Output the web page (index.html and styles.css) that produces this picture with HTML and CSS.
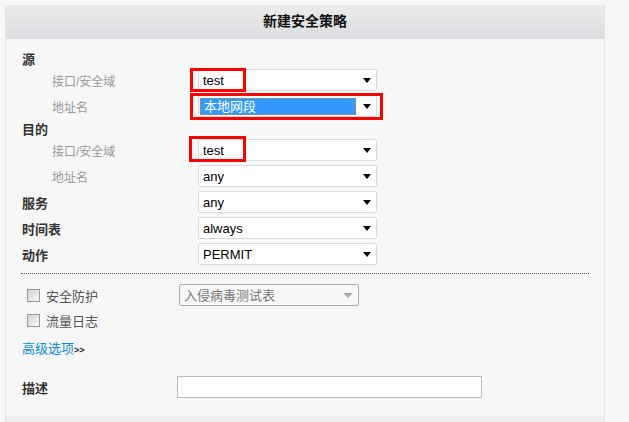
FILE: index.html
```html
<!DOCTYPE html>
<html lang="zh-CN">
<head>
    <meta charset="UTF-8">
    <title>新建安全策略</title>
    <link rel="stylesheet" href="styles.css">
</head>
<body>
    <div class="panel">
        <div class="panel-title">新建安全策略</div>

        <div class="form">
            <div class="row head"><span class="label">源</span></div>
            <div class="row">
                <span class="label sub">接口/安全域</span>
                <div class="select">
                    <span class="value">test</span><span class="arrow"></span>
                    <span class="mark mark-a"></span>
                </div>
            </div>
            <div class="row">
                <span class="label sub">地址名</span>
                <div class="select">
                    <span class="value picked">本地网段</span><span class="arrow"></span>
                    <span class="mark mark-b"></span>
                </div>
            </div>

            <div class="row head"><span class="label">目的</span></div>
            <div class="row">
                <span class="label sub">接口/安全域</span>
                <div class="select">
                    <span class="value">test</span><span class="arrow"></span>
                    <span class="mark mark-c"></span>
                </div>
            </div>
            <div class="row">
                <span class="label sub">地址名</span>
                <div class="select"><span class="value">any</span><span class="arrow"></span></div>
            </div>
            <div class="row">
                <span class="label">服务</span>
                <div class="select"><span class="value">any</span><span class="arrow"></span></div>
            </div>
            <div class="row">
                <span class="label">时间表</span>
                <div class="select"><span class="value">always</span><span class="arrow"></span></div>
            </div>
            <div class="row">
                <span class="label">动作</span>
                <div class="select"><span class="value">PERMIT</span><span class="arrow"></span></div>
            </div>

            <div class="divider"></div>

            <div class="check-row first">
                <label class="check"><span class="box"></span>安全防护</label>
                <div class="select disabled"><span class="value">入侵病毒测试表</span><span class="arrow"></span></div>
            </div>
            <div class="check-row">
                <label class="check"><span class="box"></span>流量日志</label>
            </div>

            <div class="advanced"><a href="#">高级选项</a><span class="more">&gt;&gt;</span></div>

            <div class="desc-row">
                <span class="label">描述</span>
                <input type="text" class="desc">
            </div>
        </div>

        <div class="panel-foot"></div>
    </div>
</body>
</html>
```

FILE: styles.css
```css
body {
    margin: 0;
    background: #f7f7f7;
    font-family: "Liberation Sans", "Noto Sans CJK SC", sans-serif;
    font-size: 12px;
    color: #333;
}
.panel {
    width: 598px;
    margin: 5px 0 0 5px;
    border-left: 1px solid #e4e4e4;
    border-right: 1px solid #e4e4e4;
    background: #f7f7f7;
}
.panel-title {
    height: 34px;
    line-height: 32px;
    text-align: center;
    font-size: 14px;
    font-weight: bold;
    color: #111;
    background: linear-gradient(to bottom, #ebebed, #dcdde0);
}
.form {
    padding: 10px 15px 0 15px;
}
.row {
    display: flex;
    align-items: center;
    height: 26px;
}
.row.head {
    height: 18px;
}
.label {
    width: 176px;
    flex: none;
    padding-left: 1px;
    font-size: 13px;
    font-weight: bold;
    color: #333;
}
.label.sub {
    width: 146px;
    padding-left: 31px;
    font-size: 12px;
    font-weight: normal;
    color: #999;
}
.select {
    position: relative;
    box-sizing: border-box;
    width: 179px;
    height: 22px;
    border: 1px solid #d8dbe0;
    border-radius: 2px;
    background: #fff;
    display: flex;
    align-items: center;
    justify-content: space-between;
    padding: 0 4px 0 4px;
    font-size: 13px;
    color: #000;
}
.value {
    line-height: 17px;
}
.value.picked {
    margin-left: -3px;
    width: 151px;
    padding-left: 3px;
    height: 15px;
    line-height: 15px;
    background: #3399ff;
    color: #fff;
    border: 1px dotted #c8843a;
}
.arrow {
    width: 0;
    height: 0;
    border-left: 4px solid transparent;
    border-right: 4px solid transparent;
    border-top: 5px solid #000;
    margin-right: 1px;
}
/* red highlight boxes drawn over the screenshot */
.mark {
    position: absolute;
    border: 3px solid #f00;
    box-sizing: border-box;
}
.mark-a {
    left: -9px;
    top: -2px;
    width: 56px;
    height: 24px;
}
.mark-b {
    left: -9px;
    top: -3px;
    width: 193px;
    height: 27px;
}
.mark-c {
    left: -10px;
    top: -4px;
    width: 57px;
    height: 26px;
}
.divider {
    margin-top: 6px;
    border-top: 1px dotted #555;
}
.check-row {
    display: flex;
    align-items: center;
    height: 26px;
}
.check-row.first {
    margin-top: 9px;
    height: 24px;
}
.check {
    width: 152px;
    flex: none;
    display: flex;
    align-items: center;
    padding-left: 6px;
    font-size: 13px;
    color: #555;
}
.box {
    width: 11px;
    height: 11px;
    border: 1px solid #999;
    margin-right: 6px;
    background: linear-gradient(135deg, #d0d0d0, #fafafa);
}
.select.disabled {
    width: 180px;
    border-color: #aaa;
    background: #f7f7f7;
    color: #777;
}
.select.disabled .arrow {
    border-top-color: #aaa;
    border-left-width: 5px;
    border-right-width: 5px;
}
.advanced {
    margin-top: 5px;
    height: 22px;
    line-height: 22px;
    padding-left: 1px;
    font-size: 13px;
}
.advanced a {
    color: #0b8ed1;
    text-decoration: none;
}
.more {
    font-size: 9px;
    font-weight: bold;
    color: #222;
}
.desc-row {
    display: flex;
    align-items: center;
    margin-top: 16px;
    height: 22px;
}
.desc-row .label {
    width: 155px;
}
.desc {
    width: 301px;
    height: 18px;
    margin: 0;
    padding: 1px;
    border: 1px solid #bbb;
    background: #fff;
}
.panel-foot {
    margin-top: 18px;
    height: 6px;
    background: #efefef;
}
```
